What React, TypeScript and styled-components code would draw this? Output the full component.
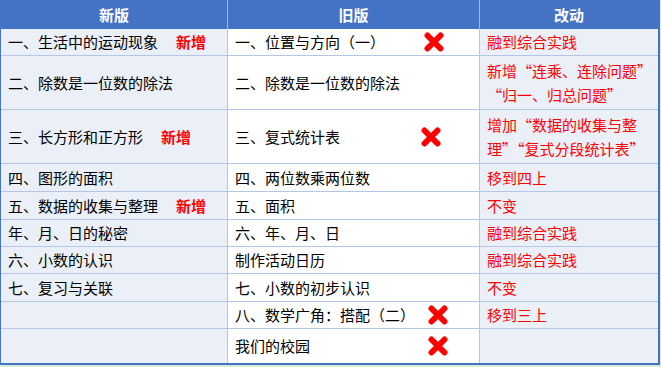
import React from 'react';
import styled, { createGlobalStyle } from 'styled-components';

const GlobalStyle = createGlobalStyle`
  body {
    margin: 0;
    background: #d7ead2;
    font-family: "Noto Sans CJK SC", "Noto Sans", sans-serif;
  }
`;

interface Row {
  left: string;
  tag?: boolean;
  mid: string;
  cross?: number;
  right: string[];
}

const ROWS: Row[] = [
  { left: '一、生活中的运动现象', tag: true, mid: '一、位置与方向（一）', cross: 35, right: ['融到综合实践'] },
  { left: '二、除数是一位数的除法', mid: '二、除数是一位数的除法', right: ['新增“连乘、连除问题”', '“归一、归总问题”'] },
  { left: '三、长方形和正方形', tag: true, mid: '三、复式统计表', cross: 38, right: ['增加“数据的收集与整', '理”“复式分段统计表”'] },
  { left: '四、图形的面积', mid: '四、两位数乘两位数', right: ['移到四上'] },
  { left: '五、数据的收集与整理', tag: true, mid: '五、面积', right: ['不变'] },
  { left: '年、月、日的秘密', mid: '六、年、月、日', right: ['融到综合实践'] },
  { left: '六、小数的认识', mid: '制作活动日历', right: ['融到综合实践'] },
  { left: '七、复习与关联', mid: '七、小数的初步认识', right: ['不变'] },
  { left: '', mid: '八、数学广角：搭配（二）', cross: 31, right: ['移到三上'] },
  { left: '', mid: '我们的校园', cross: 31, right: [] },
];

const ROW_HEIGHTS = [27, 54, 54, 28, 28, 27, 27, 28, 27, 34];

const Cross = ({ gap }: { gap: number }) => (
  <CrossIcon $gap={gap} width="20" height="20" viewBox="0 0 20 20">
    <path d="M3.5 3.5 L16.5 16.5 M16.5 3.5 L3.5 16.5" stroke="#ff0000" strokeWidth="6" strokeLinecap="round" />
  </CrossIcon>
);

const App = () => {
  return (
    <>
      <GlobalStyle />
      <Table $rows={ROW_HEIGHTS}>
        <HeadCell>新版</HeadCell>
        <HeadCell>旧版</HeadCell>
        <HeadCell $last>改动</HeadCell>
        {ROWS.map((row, i) => {
          const last = i === ROWS.length - 1;
          return (
            <React.Fragment key={i}>
              <Cell $tone="light" $last={last}>
                {row.left}
                {row.tag && <Tag>新增</Tag>}
              </Cell>
              <MidCell $last={last}>
                <span>{row.mid}</span>
                {row.cross !== undefined && <Cross gap={row.cross} />}
              </MidCell>
              <Cell $tone="light" $last={last} $red $end>
                <Lines>
                  {row.right.map((line, j) => (
                    <div key={j}>{line}</div>
                  ))}
                </Lines>
              </Cell>
            </React.Fragment>
          );
        })}
      </Table>
    </>
  );
};

export default App;

const Table = styled.div<{ $rows: number[] }>`
  width: 660px;
  box-sizing: border-box;
  display: grid;
  grid-template-columns: 227px 252px 178px;
  grid-template-rows: 29px ${({ $rows }) => $rows.map((h) => `${h}px`).join(' ')};
  border-left: 1px solid #4472c4;
  border-right: 2px solid #4472c4;
  border-bottom: 2px solid #4472c4;
  font-size: 15px;
`;

const HeadCell = styled.div<{ $last?: boolean }>`
  background: #4472c4;
  color: #ffffff;
  font-weight: bold;
  display: flex;
  align-items: center;
  justify-content: center;
  box-sizing: border-box;
  border-right: ${({ $last }) => ($last ? 'none' : '1px solid #a3b9e4')};
`;

const Cell = styled.div<{ $tone: 'light' | 'white'; $last?: boolean; $red?: boolean; $end?: boolean }>`
  display: flex;
  align-items: center;
  box-sizing: border-box;
  padding: 0 7px;
  line-height: 24px;
  background: ${({ $tone }) => ($tone === 'light' ? '#eaeff8' : '#ffffff')};
  color: ${({ $red }) => ($red ? '#ff0000' : '#000000')};
  border-right: ${({ $end }) => ($end ? 'none' : '1px solid #b4c6e7')};
  border-bottom: ${({ $last }) => ($last ? 'none' : '1px solid #b4c6e7')};
  white-space: nowrap;
`;

const MidCell = styled(Cell).attrs({ $tone: 'white' as const })`
  justify-content: space-between;
`;

const Tag = styled.span`
  margin-left: 18px;
  color: #ff0000;
  font-weight: bold;
`;

const Lines = styled.div`
  display: flex;
  flex-direction: column;
`;

const CrossIcon = styled.svg<{ $gap: number }>`
  flex: none;
  margin-right: ${({ $gap }) => $gap - 7}px;
`;
